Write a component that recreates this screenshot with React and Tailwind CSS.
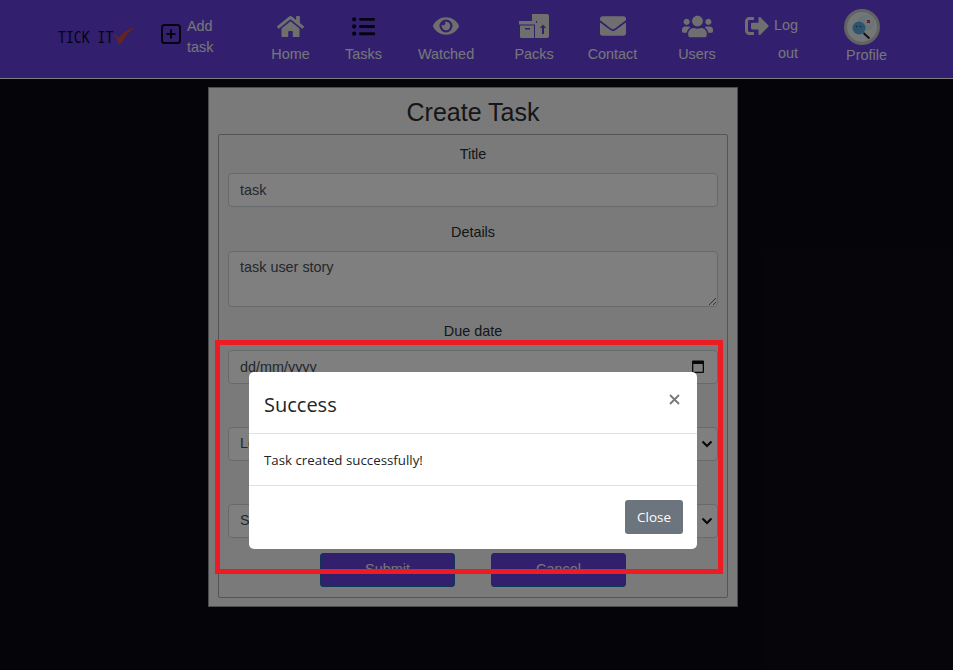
import { FaHome, FaListUl, FaEye, FaEnvelope, FaUsers, FaSignOutAlt } from "react-icons/fa";

const navItems = [
    { label: "Home", icon: <FaHome className="text-[27px] text-[#dedede]" />, width: "w-[39px]", gap: "ml-[54px]" },
    { label: "Tasks", icon: <FaListUl className="text-[23px] text-[#0b0820]" />, width: "w-[37px]", gap: "ml-[35px]" },
    { label: "Watched", icon: <FaEye className="text-[26px] text-[#dedede]" />, width: "w-[56px]", gap: "ml-[36px]" },
    { label: "Packs", icon: <PacksIcon />, width: "w-[38px]", gap: "ml-[41px]" },
    { label: "Contact", icon: <FaEnvelope className="text-[26px] text-[#dedede]" />, width: "w-[49px]", gap: "ml-[35px]" },
    { label: "Users", icon: <FaUsers className="text-[31px] text-[#dedede]" />, width: "w-[36px]", gap: "ml-[42px]" },
];

function PacksIcon() {
    return (
        <svg width="30" height="24" viewBox="0 0 30 24" fill="#dedede">
            <path d="M13 0h15a2 2 0 0 1 2 2v20a2 2 0 0 1-2 2H16V9h2V7h-5z" />
            <path d="M0 7h17v3.5H0z" />
            <path d="M1 11.5h14V24H2.500A1.500 1.500 0 0 1 1 22.500z" />
            <path d="M6 14h5v1.500H6z" fill="#6440dc" />
            <path d="M23 20v-6h-2l3-3.500 3 3.500h-2v6z" fill="#6440dc" />
        </svg>
    );
}

function Logo() {
    return (
        <div className="flex items-center w-[78px] h-[24px] ml-[58px] -mt-[2px]">
            <span className="font-['DejaVu_Sans_Mono'] text-[16px] leading-none text-[#0a0820] whitespace-nowrap origin-left scale-x-[0.82] w-[55px]">
                TICK IT
            </span>
            <svg width="22" height="17" viewBox="0 0 22 17" className="-mt-[5px]" fill="#c84a44">
                <path d="M0 7.500c2.500-.5 4 1.500 5 4C9 6.500 15 1.500 22 0c-5.500 4-10 9-13 15.500-.6 1.500-3 2-3.600.5C4.500 13 3 9.500 0 7.500z" />
            </svg>
        </div>
    );
}

function AddTask() {
    return (
        <div className="flex items-center ml-[25px] -mt-[4px]">
            <svg width="20" height="20" viewBox="0 0 20 20" fill="none" stroke="#0b0820" strokeWidth="2" className="-mt-[6px]">
                <rect x="1" y="1" width="18" height="18" rx="2.500" />
                <path d="M10 5.500v9M5.500 10h9" />
            </svg>
            <div className="ml-[6px] w-[30px] text-[14.4px] leading-[21px]">
                <div>Add</div>
                <div>task</div>
            </div>
        </div>
    );
}

function Avatar() {
    return (
        <svg width="36" height="36" viewBox="0 0 36 36" className="block">
            <circle cx="18" cy="18" r="16.500" fill="#e6eef0" stroke="#c4c4c4" strokeWidth="3" />
            <circle cx="22" cy="14" r="8" fill="#cfe8f2" />
            <circle cx="15" cy="19" r="6.500" fill="#5aa9dc" />
            <path d="M12.500 17.500h.1M16.500 17.500h.1" stroke="#1d4e78" strokeWidth="1.500" strokeLinecap="round" />
            <path d="M19.500 24l6 5.500" stroke="#222" strokeWidth="2" />
            <rect x="21.500" y="9.500" width="6" height="6" fill="#f4f4f4" />
            <path d="M23 11l3 3M26 11l-3 3" stroke="#d82828" strokeWidth="1.400" />
        </svg>
    );
}

function Label({ children, className }) {
    return <label className={`block text-center text-[14.4px] leading-[18px] text-[#2a2d30] ${className}`}>{children}</label>;
}

const fieldClass = "block w-full h-[34px] px-[11px] border border-[#ced4da] rounded-[4px] bg-white text-[14.4px] text-[#495057] outline-none";

function SelectField({ value }) {
    return (
        <div className="relative">
            <select defaultValue={value} className={`${fieldClass} appearance-none`}>
                <option>{value}</option>
            </select>
            <svg width="12" height="8" viewBox="0 0 12 8" className="absolute right-[5px] top-[13px]" fill="none" stroke="#111" strokeWidth="2.200">
                <path d="M1.500 1.500L6 6l4.500-4.500" />
            </svg>
        </div>
    );
}

function CreateTaskForm() {
    return (
        <div className="w-[530px] h-[520px] ml-[208px] mt-[8px] border border-[#999] bg-[#f4f4f4] px-[9px]">
            <h1 className="h-[46px] text-center text-[25px] leading-[48px] text-[#2a2d30]">Create Task</h1>
            <div className="h-[464px] border border-[#a8a8a8] rounded-[2px] px-[9px] pt-[10px]">
                <Label className="mb-[10px]">Title</Label>
                <input defaultValue="task" className={fieldClass} />
                <Label className="mt-[16px] mb-[10px]">Details</Label>
                <textarea defaultValue="task user story" className="block w-full h-[56px] px-[11px] py-[5px] border border-[#ced4da] rounded-[4px] bg-white text-[14.4px] text-[#495057] outline-none" />
                <Label className="mt-[15px] mb-[10px]">Due date</Label>
                <div className="relative">
                    <input defaultValue="dd/mm/yyyy" className={fieldClass} />
                    <svg width="12" height="14" viewBox="0 0 12 14" className="absolute right-[14px] top-[9px]" fill="#111">
                        <path d="M1 1.500h10a1 1 0 0 1 1 1V13a1 1 0 0 1-1 1H1a1 1 0 0 1-1-1V2.500a1 1 0 0 1 1-1zM1.300 5v7.700h9.400V5z" />
                    </svg>
                </div>
                <Label className="mt-[16px] mb-[9px]">Priority</Label>
                <SelectField value="Low" />
                <Label className="mt-[16px] mb-[9px]">State</Label>
                <SelectField value="Started" />
                <div className="flex justify-center gap-[36px] mt-[15px]">
                    <button className="w-[135px] h-[34px] rounded-[3px] border border-[#1a6ea8] bg-[#6440dc] text-[14.4px] text-[#ececf4]">Submit</button>
                    <button className="w-[135px] h-[34px] rounded-[3px] border border-[#1a6ea8] bg-[#6440dc] text-[14.4px] text-[#ececf4]">Cancel</button>
                </div>
            </div>
        </div>
    );
}

function SuccessModal() {
    return (
        <div className="absolute inset-0 bg-black/50 pt-[372px] pl-[249px]">
            <div className="w-[448px] h-[177px] bg-white rounded-[5px] font-['Open_Sans'] text-[#212529]">
                <div className="flex justify-between h-[62px] px-[15px] border-b border-[#dee2e6]">
                    <h5 className="text-[20px] leading-[65px] font-medium">Success</h5>
                    <svg width="11" height="11" viewBox="0 0 11 11" className="mt-[22px] mr-[2px]" fill="none" stroke="#777" strokeWidth="1.800">
                        <path d="M1 1l9 9M10 1l-9 9" />
                    </svg>
                </div>
                <div className="h-[52px] px-[15px] border-b border-[#dee2e6] text-[13.3px] leading-[52px]">
                    Task created successfully!
                </div>
                <div className="flex justify-end pt-[14px] pr-[14px]">
                    <button className="w-[58px] h-[34px] rounded-[3px] bg-[#6c757d] text-white text-[13.5px]">Close</button>
                </div>
            </div>
        </div>
    );
}

export default function App() {
    return (
        <div className="relative h-[670px] overflow-hidden bg-[#0b0a12] font-['Liberation_Sans',sans-serif]">
            <nav className="flex items-center h-[79px] bg-[#6440dc] border-b border-white text-[#ececf4]">
                <Logo />
                <AddTask />
                {navItems.map((item) => (
                    <div key={item.label} className={`flex flex-col items-center -mt-[4px] ${item.gap} ${item.width}`}>
                        <div className="flex items-center justify-center h-[30px] mb-[4px]">{item.icon}</div>
                        <span className="text-[14.4px] leading-[18px] whitespace-nowrap">{item.label}</span>
                    </div>
                ))}
                <div className="ml-[30px] flex items-start">
                    <FaSignOutAlt className="text-[24px] mt-[3px] text-[#dedede]" />
                    <div className="ml-[5px] w-[24px] text-[14.4px] leading-[28px] text-right">
                        <div>Log</div>
                        <div>out</div>
                    </div>
                </div>
                <div className="ml-[49px] -mt-[5px] flex flex-col items-center w-[39px]">
                    <div className="self-start -ml-[3px]">
                        <Avatar />
                    </div>
                    <span className="text-[14.4px] leading-[18px] mt-[1px]">Profile</span>
                </div>
            </nav>
            <CreateTaskForm />
            <SuccessModal />
            <div className="absolute left-[215px] top-[340px] w-[508px] h-[234px] border-[5px] border-[#ed1c24]" />
        </div>
    );
}
